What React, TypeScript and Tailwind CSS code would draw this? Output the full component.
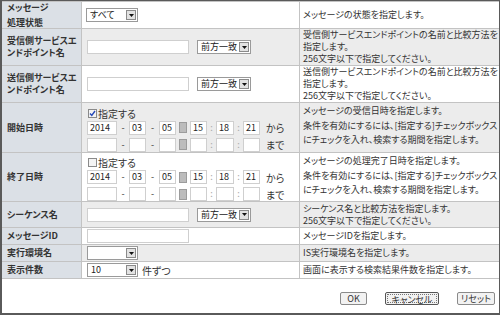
import React from "react"

const jp = "font-['Noto_Sans_CJK_JP','Noto_Sans_CJK_SC',sans-serif] [font-feature-settings:'palt']"

function Select({ value, w }: { value: string; w: string }) {
  return (
    <div className={`${w} h-[14px] border border-[#9a9a9a] bg-white flex items-center justify-between shrink-0 overflow-hidden`}>
      <span className="pl-[3px] text-[9px] leading-[12px] text-[#222] whitespace-nowrap">{value}</span>
      <span className="w-[10px] h-[10px] mr-[1px] shrink-0 bg-[#e2e2e2] border border-[#8a8a8a] flex items-center justify-center">
        <svg width="5" height="3" viewBox="0 0 5 3">
          <path d="M0 0h5L2.5 3z" fill="#111" />
        </svg>
      </span>
    </div>
  )
}

function TextBox({ w, value = "" }: { w: string; value?: string }) {
  return (
    <div className={`${w} h-[14px] border border-[#cfcfcf] bg-white shrink-0 pl-[2px] text-[9px] leading-[12px] text-[#222]`}>
      {value}
    </div>
  )
}

function CheckBox({ checked }: { checked: boolean }) {
  return (
    <span className="w-[9px] h-[9px] border border-[#8a8a8a] bg-[#f4f4f4] flex items-center justify-center">
      {checked && (
        <svg width="7" height="7" viewBox="0 0 7 7">
          <path d="M1 3.5l1.8 2L6 1" stroke="#2548b8" strokeWidth="1.4" fill="none" />
        </svg>
      )}
    </span>
  )
}

function DateLine({ vals, tail }: { vals: string[]; tail: string }) {
  return (
    <div className="flex items-center h-[14px] text-[9px] text-[#333]">
      <TextBox w="w-[30px]" value={vals[0]} />
      <span className="w-[12px] text-center">-</span>
      <TextBox w="w-[17px]" value={vals[1]} />
      <span className="w-[13px] text-center">-</span>
      <TextBox w="w-[17px]" value={vals[2]} />
      <span className="w-[8px] h-[11px] mx-[3px] bg-[#bcbcbc] border border-[#9c9c9c] shrink-0" />
      <TextBox w="w-[17px]" value={vals[3]} />
      <span className="w-[9px] text-center text-[#aaa]">:</span>
      <TextBox w="w-[18px]" value={vals[4]} />
      <span className="w-[9px] text-center text-[#aaa]">:</span>
      <TextBox w="w-[17px]" value={vals[5]} />
      <span className="pl-[6px] text-[10px]">{tail}</span>
    </div>
  )
}

function DateCell({ checked, vals }: { checked: boolean; vals: string[] }) {
  return (
    <div className="flex flex-col pt-[2px] pl-[5px]">
      <label className="flex items-center gap-[1px] h-[15px] text-[10px] text-[#333] pl-[1px]">
        <CheckBox checked={checked} />
        <span>指定する</span>
      </label>
      <DateLine vals={vals} tail="から" />
      <div className="h-[3px]" />
      <DateLine vals={["", "", "", "", "", ""]} tail="まで" />
    </div>
  )
}

function Row({
  h,
  gray,
  label,
  labelLeading = "leading-[12px]",
  control,
  desc,
  descClass = "items-center",
}: {
  h: string
  gray?: boolean
  label: React.ReactNode
  labelLeading?: string
  control: React.ReactNode
  desc: React.ReactNode
  descClass?: string
}) {
  return (
    <div className={`${h} flex border-b border-[#c3c3c3] ${gray ? "bg-[#ececec]" : "bg-white"}`}>
      <div className={`w-[80px] shrink-0 bg-[#dbe0e6] border-r border-[#c3c3c3] flex items-center pl-[5px] font-bold text-[9px] text-[#333] whitespace-nowrap ${labelLeading}`}>
        <div>{label}</div>
      </div>
      <div className="w-[218px] shrink-0 border-r border-[#c3c3c3] flex items-center">{control}</div>
      <div className={`flex-1 flex pl-[3px] text-[9px] text-[#333] whitespace-nowrap ${descClass}`}>
        <div>{desc}</div>
      </div>
    </div>
  )
}

function InputWithMatch() {
  return (
    <div className="flex items-center pl-[5px] gap-[8px]">
      <TextBox w="w-[102px]" />
      <Select value="前方一致" w="w-[54px]" />
    </div>
  )
}

export default function App() {
  return (
    <div className={`w-[500px] h-[315px] bg-white border-t border-r border-b-2 border-l-2 border-[#5a5a5a] flex flex-col ${jp}`}>
      <div className="border-t border-[#c3c3c3]">
        <Row
          h="h-[27px]"
          label={<>メッセージ<br />処理状態</>}
          labelLeading="leading-[15px]"
          control={<div className="pl-[4px]"><Select value="すべて" w="w-[52px]" /></div>}
          desc="メッセージの状態を指定します。"
        />
        <Row
          h="h-[37px]"
          gray
          label={<>受信側サービスエ<br />ンドポイント名</>}
          control={<InputWithMatch />}
          desc={<>受信側サービスエンドポイントの名前と比較方法を<br />指定します。<br />256文字以下で指定してください。</>}
          descClass="items-start leading-[12px]"
        />
        <Row
          h="h-[37px]"
          label={<>送信側サービスエ<br />ンドポイント名</>}
          control={<InputWithMatch />}
          desc={<>送信側サービスエンドポイントの名前と比較方法を<br />指定します。<br />256文字以下で指定してください。</>}
          descClass="items-start leading-[12px]"
        />
        <Row
          h="h-[50px]"
          gray
          label="開始日時"
          control={<DateCell checked vals={["2014", "03", "05", "15", "18", "21"]} />}
          desc={<>メッセージの受信日時を指定します。<br />条件を有効にするには、[指定する]チェックボックス<br />にチェックを入れ、検索する期間を指定します。</>}
          descClass="items-start pt-[1px] leading-[14.5px]"
        />
        <Row
          h="h-[49px]"
          label="終了日時"
          control={<DateCell checked={false} vals={["2014", "03", "05", "15", "18", "21"]} />}
          desc={<>メッセージの処理完了日時を指定します。<br />条件を有効にするには、[指定する]チェックボックス<br />にチェックを入れ、検索する期間を指定します。</>}
          descClass="items-start pt-[1px] leading-[14.5px]"
        />
        <Row
          h="h-[26px]"
          gray
          label="シーケンス名"
          control={<InputWithMatch />}
          desc={<>シーケンス名と比較方法を指定します。<br />256文字以下で指定してください。</>}
          descClass="items-center leading-[12px]"
        />
        <Row
          h="h-[17px]"
          label="メッセージID"
          control={<div className="pl-[5px]"><TextBox w="w-[102px]" /></div>}
          desc="メッセージIDを指定します。"
        />
        <Row
          h="h-[17px]"
          gray
          label="実行環境名"
          control={<div className="pl-[5px]"><Select value="" w="w-[51px]" /></div>}
          desc="IS実行環境名を指定します。"
        />
        <Row
          h="h-[17px]"
          label="表示件数"
          control={
            <div className="pl-[5px] flex items-center gap-[4px] text-[10px] text-[#333]">
              <Select value="10" w="w-[51px]" />
              <span>件ずつ</span>
            </div>
          }
          desc="画面に表示する検索結果件数を指定します。"
        />
      </div>
      <div className="flex-1 flex justify-end items-start pt-[13px] pr-[4px] gap-[18px] text-[9px] text-[#333]">
        <button className="w-[27px] h-[13px] border border-[#8a8a8a] rounded-[2px] bg-[#f2f2f2] leading-[11px]">OK</button>
        <button className="w-[54px] h-[13px] border border-[#555] rounded-[2px] bg-[#f2f2f2] p-[1px]">
          <span className="block h-full border border-dotted border-[#777] leading-[9px]">キャンセル</span>
        </button>
        <button className="w-[38px] h-[13px] border border-[#8a8a8a] rounded-[2px] bg-[#f2f2f2] leading-[11px]">リセット</button>
      </div>
    </div>
  )
}
